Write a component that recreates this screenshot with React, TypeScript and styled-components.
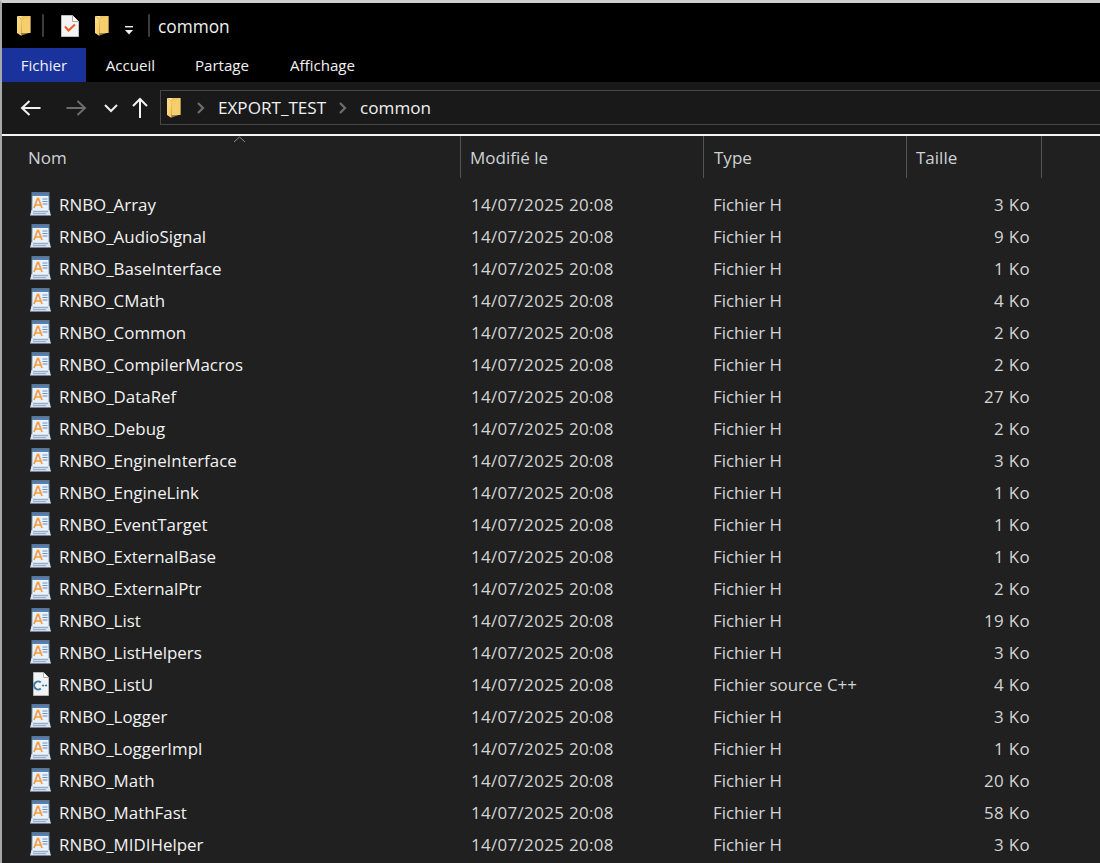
import React from 'react';
import styled, { createGlobalStyle } from 'styled-components';

const Global = createGlobalStyle`
  html, body { margin: 0; padding: 0; background: #202020; }
  body { font-family: "Open Sans", "Noto Sans", "Liberation Sans", sans-serif; overflow: hidden; }
`;
const Win = styled.div`
  width: 1100px; height: 863px; box-sizing: border-box; overflow: hidden;
  border-top: 3px solid #cfcfcf; border-left: 2px solid #a8a8a8;
  display: flex; flex-direction: column; background: #202020;
`;
const TitleBar = styled.div`
  height: 45px; background: #000; display: flex; align-items: center; flex-shrink: 0;
  padding-left: 14px; color: #f0f0f0; font-size: 17.3px;
`;
const TitleText = styled.span`
  margin-left: 2px; margin-top: 2px;
`;
const Sep = styled.div<{ $ml: number; $mr: number }>`
  width: 2px; height: 23px; background: #3c3c3c; border-radius: 1px;
  margin-left: ${p => p.$ml}px; margin-right: ${p => p.$mr}px;
`;
const QuickBtn = styled.span<{ $ml: number; $mt?: number }>`
  display: inline-flex; margin-left: ${p => p.$ml}px; margin-top: ${p => p.$mt ?? 0}px;
`;
const Tabs = styled.div`
  height: 34px; background: #000; display: flex; flex-shrink: 0; font-size: 15.1px; color: #f2f2f2;
`;
const Tab = styled.div<{ $w: number; $active?: boolean }>`
  width: ${p => p.$w}px; display: flex; align-items: center; justify-content: center;
  background: ${p => (p.$active ? '#1a339c' : 'transparent')};
`;
const NavBar = styled.div`
  height: 52px; background: #191919; display: flex; align-items: center; flex-shrink: 0;
  border-bottom: 2px solid #f4f4f4; box-sizing: content-box;
`;
const NavIcons = styled.div`
  width: 158px; display: flex; align-items: center; flex-shrink: 0; height: 100%;
  padding-left: 18px; box-sizing: border-box;
`;
const NavBtn = styled.span<{ $ml: number }>`
  display: inline-flex; margin-left: ${p => p.$ml}px;
`;
const AddressBox = styled.div`
  flex: 1; height: 33px; margin-top: -1px; border: 1px solid #474747; border-right: none;
  display: flex; align-items: center; padding-left: 5px; color: #f0f0f0; font-size: 17.1px;
`;
const Chevron = styled.span<{ $ml: number; $mr: number }>`
  display: inline-flex; margin-left: ${p => p.$ml}px; margin-right: ${p => p.$mr}px;
`;
const HeaderRow = styled.div`
  display: flex; height: 42px; position: relative; flex-shrink: 0;
  color: #cfd3d6; font-size: 17px;
`;
const HeaderCell = styled.div<{ $w: number; $pad: number }>`
  width: ${p => p.$w}px; box-sizing: border-box; padding-left: ${p => p.$pad}px;
  border-right: 1px solid #555; display: flex; align-items: center;
`;
const SortCaret = styled.svg`
  position: absolute; left: 231px; top: 0;
`;
const List = styled.div`
  padding-top: 10px; display: flex; flex-direction: column;
`;
const Row = styled.div`
  height: 32px; display: flex; align-items: center; flex-shrink: 0; font-size: 16.9px;
`;
const NameCell = styled.div`
  width: 458px; box-sizing: border-box; padding-left: 28px; display: flex; align-items: center; gap: 8px;
  color: #f2f2f2;
`;
const DateCell = styled.div`
  width: 243px; padding-left: 11px; box-sizing: border-box; color: #d4d4d4; letter-spacing: .35px;
`;
const TypeCell = styled.div`
  width: 203px; padding-left: 10px; box-sizing: border-box; color: #d4d4d4;
`;
const SizeCell = styled.div`
  width: 124px; text-align: right; box-sizing: border-box; color: #d4d4d4; letter-spacing: .35px;
`;

const Folder = ({ h = 22 }: { h?: number }) => (
  <svg width={16} height={h} viewBox="0 0 16 22">
    <defs>
      <linearGradient id="fg" x1="0" y1="0" x2="1" y2="1">
        <stop offset="0" stopColor="#ffe28a" />
        <stop offset="1" stopColor="#f6c85c" />
      </linearGradient>
    </defs>
    <path d="M1 1h13.5v17H5.5L5 1z" fill="#f3c662" />
    <path d="M1 1l4.5 3v17L1 18z" fill="url(#fg)" />
    <path d="M5.5 4L1 1h4.5z" fill="#ffe9a8" />
    <path d="M5.5 5v15.5l9-3V1z" fill="#fad477" opacity=".6" />
  </svg>
);

const CheckDoc = () => (
  <svg width={18} height={22} viewBox="0 0 18 22">
    <path d="M.5.5h11l6 6v15H.5z" fill="#f4f4f4" stroke="#bdbdbd" />
    <path d="M11.5.5v6h6" fill="#fff" stroke="#a8a8a8" />
    <path d="M4 11.5l3.5 4L14 9.5" fill="none" stroke="#ee5c24" strokeWidth="2" />
  </svg>
);

const HIcon = () => (
  <svg width={21} height={24} viewBox="0 0 21 24">
    <defs>
      <linearGradient id="hb" x1="0" y1="0" x2="0" y2="1">
        <stop offset="0" stopColor="#4f759c" />
        <stop offset="1" stopColor="#9dbcd8" />
      </linearGradient>
    </defs>
    <rect x="1.5" y="0" width="18" height="21" fill="url(#hb)" />
    <rect x="2.5" y="4" width="16" height="14" fill="#eaf1f8" />
    <path d="M1.5 18L0 23.5h21L19.5 18z" fill="#d5e4f2" />
    <path d="M3 19.6h15M3 21.6h13" stroke="#8a9dbd" strokeWidth=".9" />
    <path d="M4 16L7.5 6.5h1L12 16M5.5 13h5" fill="none" stroke="#f79a3e" strokeWidth="1.7" />
    <path d="M12.5 7h5M12.5 9.5h5M12.5 12h5" stroke="#5f93d2" strokeWidth="1.1" />
  </svg>
);

const CppIcon = () => (
  <svg width={21} height={24} viewBox="0 0 21 24">
    <path d="M3.5.5h10l5 5v18h-15z" fill="#f1f3f5" stroke="#b8b8b8" />
    <path d="M13.5.5v5h5" fill="#fff" stroke="#b0b0b0" />
    <path d="M10.8 10.5a4 4 0 1 0 0 6" fill="none" stroke="#3d7ca8" strokeWidth="2" />
    <path d="M12 13.5h2.2M13.1 12.4v2.2M15 13.5h2.2M16.1 12.4v2.2" stroke="#3d7ca8" strokeWidth="1" />
  </svg>
);

const Arrow = ({ color, dir, w = 22 }: { color: string; dir: 'l' | 'r'; w?: number }) => (
  <svg width={w} height={18} viewBox="0 0 22 18" fill="none" stroke={color} strokeWidth="2">
    {dir === 'l' ? <path d="M20.5 9H2M9.5 2L2 9l7.5 7" /> : <path d="M1.5 9H20M12.5 2L20 9l-7.5 7" />}
  </svg>
);

const rows: [string, string, string, boolean?][] = [
  ['RNBO_Array', 'Fichier H', '3 Ko'],
  ['RNBO_AudioSignal', 'Fichier H', '9 Ko'],
  ['RNBO_BaseInterface', 'Fichier H', '1 Ko'],
  ['RNBO_CMath', 'Fichier H', '4 Ko'],
  ['RNBO_Common', 'Fichier H', '2 Ko'],
  ['RNBO_CompilerMacros', 'Fichier H', '2 Ko'],
  ['RNBO_DataRef', 'Fichier H', '27 Ko'],
  ['RNBO_Debug', 'Fichier H', '2 Ko'],
  ['RNBO_EngineInterface', 'Fichier H', '3 Ko'],
  ['RNBO_EngineLink', 'Fichier H', '1 Ko'],
  ['RNBO_EventTarget', 'Fichier H', '1 Ko'],
  ['RNBO_ExternalBase', 'Fichier H', '1 Ko'],
  ['RNBO_ExternalPtr', 'Fichier H', '2 Ko'],
  ['RNBO_List', 'Fichier H', '19 Ko'],
  ['RNBO_ListHelpers', 'Fichier H', '3 Ko'],
  ['RNBO_ListU', 'Fichier source C++', '4 Ko', true],
  ['RNBO_Logger', 'Fichier H', '3 Ko'],
  ['RNBO_LoggerImpl', 'Fichier H', '1 Ko'],
  ['RNBO_Math', 'Fichier H', '20 Ko'],
  ['RNBO_MathFast', 'Fichier H', '58 Ko'],
  ['RNBO_MIDIHelper', 'Fichier H', '3 Ko'],
];

export default function App() {
  return (
    <Win>
      <Global />
      <TitleBar>
        <Folder />
        <Sep $ml={10} $mr={17} />
        <CheckDoc />
        <QuickBtn $ml={15}><Folder /></QuickBtn>
        <QuickBtn $ml={14} $mt={10}>
          <svg width={10} height={10} viewBox="0 0 10 10" fill="#f0f0f0">
            <rect x="1" y="0" width="8" height="1.4" />
            <path d="M1 4h8L5 8.5z" />
          </svg>
        </QuickBtn>
        <Sep $ml={14} $mr={6} />
        <TitleText>common</TitleText>
      </TitleBar>
      <Tabs>
        <Tab $w={84} $active>Fichier</Tab>
        <Tab $w={89}>Accueil</Tab>
        <Tab $w={94}>Partage</Tab>
        <Tab $w={107}>Affichage</Tab>
      </Tabs>
      <NavBar>
        <NavIcons>
          <Arrow color="#f0f0f0" dir="l" />
          <NavBtn $ml={23}><Arrow color="#6d6d6d" dir="r" /></NavBtn>
          <NavBtn $ml={17}>
            <svg width={14} height={10} viewBox="0 0 14 10" fill="none" stroke="#eee" strokeWidth="2"><path d="M1 2l6 6 6-6" /></svg>
          </NavBtn>
          <NavBtn $ml={13}>
            <svg width={18} height={22} viewBox="0 0 18 22" fill="none" stroke="#f4f4f4" strokeWidth="2"><path d="M9 21V2M2 9l7-7 7 7" /></svg>
          </NavBtn>
        </NavIcons>
        <AddressBox>
          <Folder />
          <Chevron $ml={15} $mr={13}>
            <svg width={8} height={12} viewBox="0 0 8 12" fill="none" stroke="#6e6e6e" strokeWidth="2.2"><path d="M1 1l5 5-5 5" /></svg>
          </Chevron>
          <span>EXPORT_TEST</span>
          <Chevron $ml={13} $mr={13}>
            <svg width={8} height={12} viewBox="0 0 8 12" fill="none" stroke="#6e6e6e" strokeWidth="2.2"><path d="M1 1l5 5-5 5" /></svg>
          </Chevron>
          <span>common</span>
        </AddressBox>
      </NavBar>
      <HeaderRow>
        <SortCaret width={13} height={7} viewBox="0 0 13 7" fill="none" stroke="#8a8a8a" strokeWidth="1"><path d="M1 6l5.5-5L12 6" /></SortCaret>
        <HeaderCell $w={459} $pad={26}>Nom</HeaderCell>
        <HeaderCell $w={243} $pad={9}>Modifié le</HeaderCell>
        <HeaderCell $w={203} $pad={10}>Type</HeaderCell>
        <HeaderCell $w={135} $pad={9}>Taille</HeaderCell>
      </HeaderRow>
      <List>
        {rows.map(([n, t, s, cpp]) => (
          <Row key={n}>
            <NameCell>{cpp ? <CppIcon /> : <HIcon />}<span>{n}</span></NameCell>
            <DateCell>14/07/2025 20:08</DateCell>
            <TypeCell>{t}</TypeCell>
            <SizeCell>{s}</SizeCell>
          </Row>
        ))}
      </List>
    </Win>
  );
}
